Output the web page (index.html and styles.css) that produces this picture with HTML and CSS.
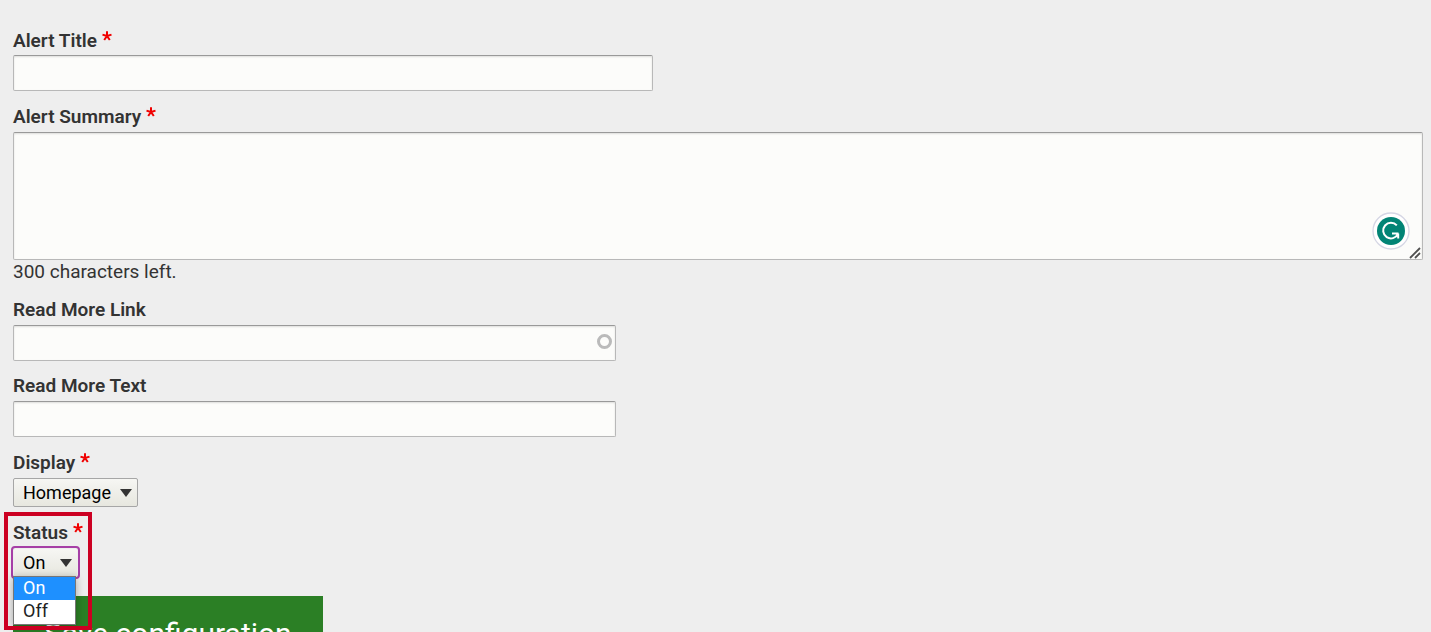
FILE: index.html
```html
<!DOCTYPE html>
<html lang="en">
<head>
<meta charset="utf-8">
<title>Alert settings</title>
<link rel="stylesheet" href="styles.css">
</head>
<body>
<svg class="defs" aria-hidden="true">
  <symbol id="star" viewBox="0 0 10 10"><path d="M5 5V.3M5 5L.5 3.600M5 5l4.500-1.400M5 5L2.200 9M5 5l2.800 4" fill="none" stroke="#f00000" stroke-width="2"/></symbol>
  <symbol id="arrow" viewBox="0 0 12 8"><path d="M0 0h12L6 8z"/></symbol>
</svg>
<form class="form">
  <div class="field">
    <label class="label" for="title">Alert Title <svg class="star"><use href="#star"/></svg></label>
    <input class="input input-wide" id="title" type="text">
  </div>
  <div class="field">
    <label class="label" for="summary">Alert Summary <svg class="star"><use href="#star"/></svg></label>
    <div class="control">
      <textarea class="input area" id="summary"></textarea>
      <svg class="assistant" viewBox="0 0 38 38" aria-hidden="true">
        <circle cx="19" cy="19" r="18" fill="#fff" stroke="#d5d6e4" stroke-width="1.300"/>
        <circle cx="19" cy="19" r="14" fill="#028475"/>
        <path d="M24.800 13.400A7.800 7.800 0 1 0 26 22M20 21.500H26.500M26.200 26.500v-5" fill="none" stroke="#fff" stroke-width="2"/>
      </svg>
      <svg class="grip" viewBox="0 0 12 12" aria-hidden="true"><path d="M1 11L11 1M6 11l5-5" fill="none" stroke="#505050" stroke-width="1.800"/></svg>
    </div>
    <div class="hint">300 characters left.</div>
  </div>
  <div class="group">
    <div class="field">
      <label class="label" for="link">Read More Link</label>
      <div class="control control-narrow">
        <input class="input" id="link" type="text">
        <span class="throbber"></span>
      </div>
    </div>
    <div class="field">
      <label class="label" for="text">Read More Text</label>
      <input class="input input-narrow" id="text" type="text">
    </div>
  </div>
  <div class="field">
    <label class="label" for="display">Display <svg class="star"><use href="#star"/></svg></label>
    <div class="picker">
      <select class="select" id="display"><option>Homepage</option></select>
      <svg class="arrow"><use href="#arrow"/></svg>
    </div>
  </div>
  <div class="field status">
    <label class="label" for="status">Status <svg class="star"><use href="#star"/></svg></label>
    <div class="picker">
      <select class="select select-focus" id="status"><option>On</option><option>Off</option></select>
      <svg class="arrow"><use href="#arrow"/></svg>
      <ul class="menu">
        <li class="option option-active">On</li>
        <li class="option">Off</li>
      </ul>
    </div>
    <div class="highlight"></div>
  </div>
  <button class="save" type="button">Save configuration</button>
</form>
</body>
</html>
```
FILE: styles.css
```css
* { box-sizing: border-box; }
html { scrollbar-width: none; }
body {
  margin: 0;
  background: #eee;
  color: #333;
  font: 19px/24px Roboto, sans-serif;
}
.defs { position: absolute; width: 0; height: 0; }
.form {
  display: flex;
  flex-direction: column;
  gap: 14px;
  padding: 29px 8px 0 13px;
}
.group { display: flex; flex-direction: column; gap: 13px; }
.field { display: flex; flex-direction: column; align-items: flex-start; }
.label { height: 24px; margin-bottom: 3px; font-weight: 600; }
.field:first-child .label { margin-bottom: 2px; }
.group .label.label { margin-bottom: 3px; }
.star { width: 10px; height: 10px; vertical-align: 6px; }
.control { position: relative; display: flex; width: 100%; }
.input {
  width: 100%;
  height: 36px;
  padding: 4px 8px;
  border: 1px solid #b8b8b8;
  border-top-color: #999;
  border-radius: 2px;
  background: #fcfcfa;
  box-shadow: inset 0 1px 2px rgba(0, 0, 0, 0.125);
  color: #333;
  font: inherit;
}
.input-wide { max-width: 640px; }
.input-narrow, .control-narrow { max-width: 603px; }
.area { height: 128px; resize: none; }
.assistant { position: absolute; right: 13px; bottom: 10px; width: 38px; height: 38px; }
.grip { position: absolute; right: 2px; bottom: 1px; width: 12px; height: 12px; }
.throbber {
  position: absolute;
  right: 4px;
  top: 9px;
  width: 15px;
  height: 15px;
  border: 3px solid #bababa;
  border-radius: 50%;
}
.picker { position: relative; display: flex; }
.select {
  appearance: none;
  min-width: 65px;
  height: 29px;
  padding: 0 26px 0 9px;
  border: 1px solid #a6a6a6;
  border-radius: 2px;
  background: linear-gradient(#f6f6f3, #e7e7df);
  color: #000;
  font: 18px/24px Roboto, sans-serif;
}
.select-focus {
  border-color: #eee;
  outline: 2px solid #a63fa6;
  outline-offset: 0;
}
.arrow {
  position: absolute;
  right: 6px;
  top: 11px;
  width: 12px;
  height: 8px;
  fill: #333;
  pointer-events: none;
}
.status { position: relative; z-index: 1; }
.menu {
  position: absolute;
  top: 28px;
  left: 0;
  width: 63px;
  margin: 0;
  padding: 0 0 1px;
  list-style: none;
  border: 1px solid #767676;
  background: #fff;
  box-shadow: 0 2px 8px rgba(0, 0, 0, 0.3);
  font-size: 18px;
}
.option { height: 23px; padding-left: 9px; line-height: 22px; color: #222; }
.option-active { background: #1e90ff; color: #fff; }
.highlight {
  position: absolute;
  top: -9px;
  left: -9px;
  width: 88px;
  height: 118px;
  border: 4px solid #cc0022;
  pointer-events: none;
}
.save {
  align-self: flex-start;
  margin-top: 5px;
  padding: 20px 31px;
  border: 0;
  background: #2b7f25;
  color: #fff;
  font: 30px/36px Roboto, sans-serif;
}
```
